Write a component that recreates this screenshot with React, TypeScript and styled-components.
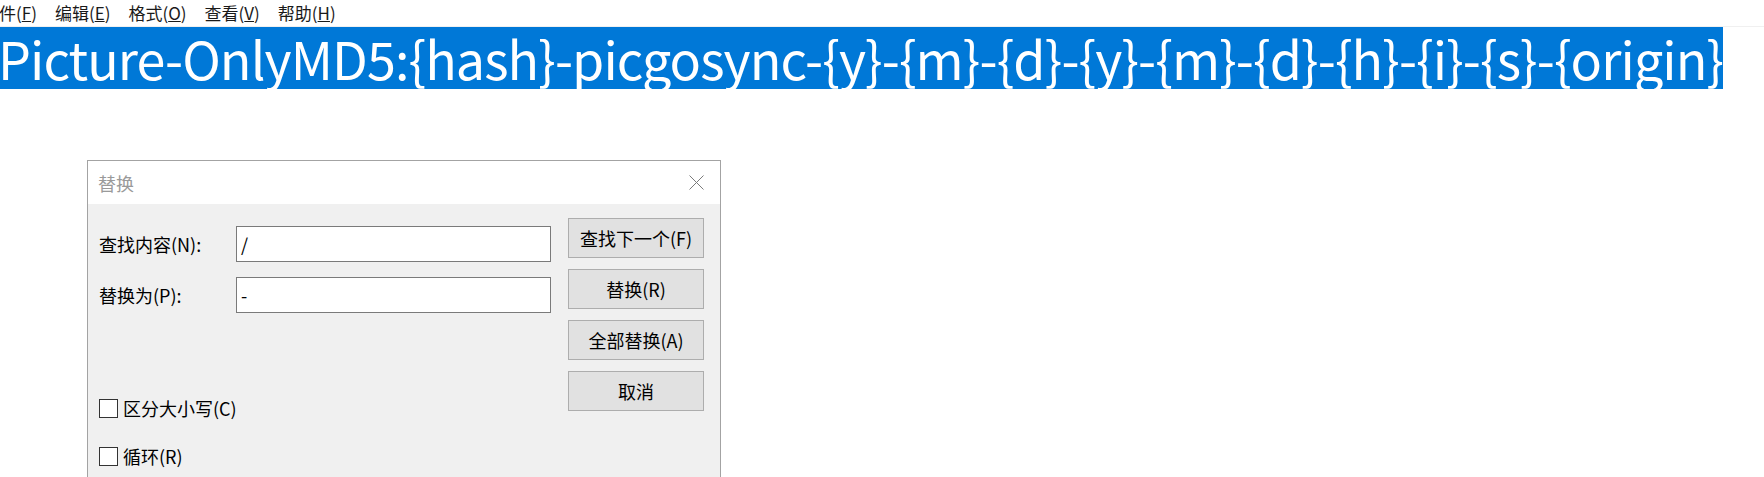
import React from "react";
import styled, { createGlobalStyle } from "styled-components";

const Global = createGlobalStyle`
  html, body { margin: 0; padding: 0; background: #ffffff; overflow: hidden; }
  body { width: 1764px; height: 477px; position: relative; }
  * { box-sizing: border-box; }
`;

const FONT = `"Noto Sans CJK SC", "Noto Sans", sans-serif`;

const Page = styled.div`
  position: relative;
  width: 1764px;
  height: 477px;
  overflow: hidden;
  font-family: ${FONT};
`;

const MenuBar = styled.div`
  display: flex;
  height: 27px;
  align-items: center;
  border-bottom: 1px solid #f0f0f0;
  margin-left: -27px;
`;

const MenuItem = styled.span`
  padding: 0 9px;
  font-size: 17px;
  color: #1a1a1a;
  line-height: 22px;
`;

const Editor = styled.div`
  display: flex;
  overflow: hidden;
`;

const Selected = styled.div`
  margin-left: -8px;
  padding-left: 6px;
  background: #0078d7;
  color: #ffffff;
  font-size: 52px;
  letter-spacing: -0.9px;
  height: 62px;
  line-height: 62px;
  white-space: nowrap;
`;

const Dialog = styled.div`
  position: absolute;
  left: 87px;
  top: 160px;
  width: 634px;
  height: 340px;
  border: 1px solid #a3a3a3;
  background: #f0f0f0;
  display: flex;
  flex-direction: column;
`;

const TitleBar = styled.div`
  height: 43px;
  background: #ffffff;
  display: flex;
  align-items: center;
  justify-content: space-between;
  padding: 0 16px 0 10px;
`;

const Title = styled.span`
  font-size: 18px;
  color: #9a9a9a;
`;

const Body = styled.div`
  display: flex;
  padding: 14px 16px 0 11px;
`;

const LeftPane = styled.div`
  flex: 1;
  display: flex;
  flex-direction: column;
  padding-top: 8px;
`;

const FieldRow = styled.div`
  display: flex;
  align-items: center;
  margin-bottom: 15px;
`;

const Label = styled.span`
  width: 137px;
  font-size: 18px;
  color: #000;
`;

const Input = styled.div`
  width: 315px;
  height: 36px;
  background: #fff;
  border: 1px solid #7a7a7a;
  font-size: 18px;
  line-height: 34px;
  padding-left: 4px;
  color: #000;
`;

const Options = styled.div`
  display: flex;
  flex-direction: column;
  margin-top: 69px;
  gap: 26px;
`;

const CheckRow = styled.label`
  display: flex;
  align-items: center;
  gap: 5px;
  font-size: 18px;
  color: #000;
  height: 22px;
`;

const Box = styled.span`
  width: 19px;
  height: 19px;
  border: 1px solid #333;
  background: #fff;
`;

const Buttons = styled.div`
  display: flex;
  flex-direction: column;
  gap: 11px;
`;

const Button = styled.div`
  width: 136px;
  height: 40px;
  background: #e1e1e1;
  border: 1px solid #adadad;
  display: flex;
  align-items: center;
  justify-content: center;
  font-size: 18px;
  color: #000;
`;

const CloseIcon = () => (
  <svg width="15" height="15" viewBox="0 0 15 15">
    <path d="M0.5 0.5 L14.5 14.5 M14.5 0.5 L0.5 14.5" stroke="#7a7a7a" strokeWidth="1" fill="none" />
  </svg>
);

export default function App() {
  return (
    <Page>
      <Global />
      <MenuBar>
        <MenuItem>文件(<u>F</u>)</MenuItem>
        <MenuItem>编辑(<u>E</u>)</MenuItem>
        <MenuItem>格式(<u>O</u>)</MenuItem>
        <MenuItem>查看(<u>V</u>)</MenuItem>
        <MenuItem>帮助(<u>H</u>)</MenuItem>
      </MenuBar>
      <Editor>
        <Selected>Picture-OnlyMD5:{"{hash}"}-picgosync-{"{y}"}-{"{m}"}-{"{d}"}-{"{y}"}-{"{m}"}-{"{d}"}-{"{h}"}-{"{i}"}-{"{s}"}-{"{origin}"}</Selected>
      </Editor>
      <Dialog>
        <TitleBar>
          <Title>替换</Title>
          <CloseIcon />
        </TitleBar>
        <Body>
          <LeftPane>
            <FieldRow>
              <Label>查找内容(N):</Label>
              <Input>/</Input>
            </FieldRow>
            <FieldRow>
              <Label>替换为(P):</Label>
              <Input>-</Input>
            </FieldRow>
            <Options>
              <CheckRow><Box />区分大小写(C)</CheckRow>
              <CheckRow><Box />循环(R)</CheckRow>
            </Options>
          </LeftPane>
          <Buttons>
            <Button>查找下一个(F)</Button>
            <Button>替换(R)</Button>
            <Button>全部替换(A)</Button>
            <Button>取消</Button>
          </Buttons>
        </Body>
      </Dialog>
    </Page>
  );
}
